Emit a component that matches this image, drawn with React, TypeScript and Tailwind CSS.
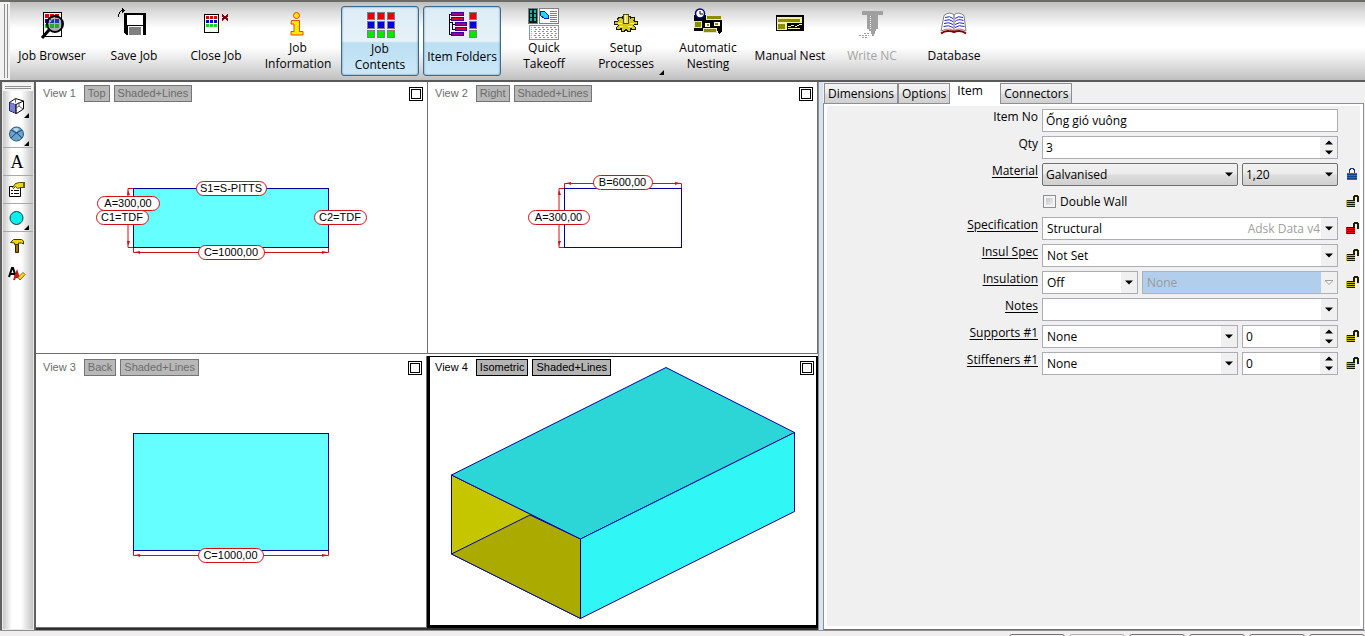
import { useState } from 'react';
import type { ReactNode } from 'react';

const RED = '#d01018';
const NAVY = '#0000a0';
const RGB_ROWS = ['#e80000', '#0000e0', '#00e800'];

/* ---------- Toolbar icons ---------- */

function Icon({ children }: { children: ReactNode }) {
  return (
    <svg width="32" height="32" viewBox="0 0 32 32" fill="none" shapeRendering="crispEdges" aria-hidden="true">
      {children}
    </svg>
  );
}

function Cells({ x, y, cols, w, h, pitchX, pitchY, stroke }: { x: number; y: number; cols: number; w: number; h: number; pitchX: number; pitchY: number; stroke?: string }) {
  return (
    <>
      {RGB_ROWS.map((fill, row) =>
        Array.from({ length: cols }, (_, col) => (
          <rect key={`${row}-${col}`} x={x + col * pitchX} y={y + row * pitchY} width={w} height={h} fill={fill} stroke={stroke} />
        ))
      )}
    </>
  );
}

const JobBrowserIcon = () => (
  <Icon>
    <rect x="7.5" y="4.5" width="18" height="24" fill="#fff" stroke="#000" />
    <Cells x={9} y={6} cols={3} w={4} h={4} pitchX={5} pitchY={5} />
    <g shapeRendering="auto">
      <circle cx="19" cy="16" r="8" fill="#506070" fillOpacity="0.5" stroke="#000" strokeWidth="2" />
      <path d="M14 14a6 6 0 0 1 4-4" stroke="#d0e0e8" />
      <path d="M13 22l-7 8" stroke="#000" strokeWidth="3" />
    </g>
  </Icon>
);

const SaveIcon = () => (
  <Icon>
    <path d="M6 5h22v22H8l-2-2z" fill="#000" />
    <path d="M9 7h16v10H9z" fill="#fff" />
    <path d="M10 18h15v9H10z" fill="#fff" />
    <path d="M11 19h12v8H11z" fill="#808080" />
    <path d="M0 6h1v3H0zM1 4h1v2H1zM2 3h1v1H2zM3 2h2v1H3zM4 0h1v5H4zM5 1h1v3H5zM6 2h1v1H6z" fill="#000" />
  </Icon>
);

const CloseIcon = () => (
  <Icon>
    <rect x="4.5" y="6.5" width="14" height="18" fill="#fff" stroke="#000" />
    <Cells x={6} y={8} cols={3} w={3} h={3} pitchX={4} pitchY={4} />
    <path d="M22 7l6 5M28 7l-6 5" stroke="#800010" strokeWidth="2" />
  </Icon>
);

const InfoIcon = () => (
  <Icon>
    <g fill="#ffe800" stroke="#e84800" shapeRendering="auto">
      <circle cx="14.5" cy="7.5" r="3" />
      <path d="M9.5 12.5h8v11h3.500v3.500h-12v-3.500h3v-7.500h-3z" />
    </g>
  </Icon>
);

const ContentsIcon = () => (
  <Icon>
    <Cells x={3.5} y={3.5} cols={3} w={7} h={7} pitchX={10} pitchY={9} stroke="#808080" />
  </Icon>
);

const FoldersIcon = () => (
  <Icon>
    <path d="M5 5.500H3.500v20H5M3.500 10.500H6M3.500 13.500h3v7H9M6 15.500h3" stroke="#000" />
    <g stroke="#4000a0">
      <rect x="5.5" y="3.5" width="12" height="3" fill="#a00080" />
      <rect x="5.5" y="8.5" width="12" height="3" fill="#e00020" />
      <rect x="9.5" y="13.500" width="11" height="3" fill="#a00080" />
      <rect x="9.5" y="18.500" width="11" height="3" fill="#e00020" />
      <rect x="5.5" y="23.500" width="12" height="3" fill="#a00080" />
    </g>
    <Cells x={23.5} y={3.5} cols={1} w={7} h={7} pitchX={10} pitchY={9} stroke="#808080" />
  </Icon>
);

const TakeoffIcon = () => (
  <Icon>
    <rect x="0.5" y="0.5" width="9" height="15" fill="#101820" stroke="#708080" />
    <path d="M3 2v12M7 2v12" stroke="#20b0a0" strokeWidth="2" strokeDasharray="3 1" />
    <rect x="11.5" y="0.5" width="19" height="15" fill="#fff" stroke="#808080" />
    <path d="M12.500 3.500h4l4 4v3h-4l-4-3z" fill="#20d8f8" stroke="#1020c0" />
    <path d="M22 3.500h7M22 5.500h7M22 7.500h7M22 9.500h7M22 11.500h7M22 13.500h7" stroke="#808080" />
    <rect x="1.500" y="17.500" width="29" height="14" fill="#fff" stroke="#909090" />
    <path d="M3.500 19v11" stroke="#30e0f0" strokeDasharray="1 1" />
    <path d="M6 19.500h23M7 21.500h22M6 23.500h23M7 25.500h22M6 27.500h23M7 29.500h22" stroke="#909090" strokeDasharray="2 2" />
  </Icon>
);

const GearIcon = () => (
  <Icon>
    <path
      d="M8.500 9.500h3l1 1v-2h3v-1h2v1h3v2l1-1h3v3h-1l1 1h3v3h-3l-1 1 2 2v2h-3l-2-1v3h-3l-1-2h-1l-1 2h-3v-3l-2 1h-3v-2l2-2-1-1h-3v-3h3l1-1-1-1z"
      fill="#d8c820"
      stroke="#181800"
    />
    <path d="M8 15.500h4M20 15.500h4M10 18.500h3M18 18.500h4" stroke="#fff480" />
    <rect x="13.500" y="6.500" width="5" height="9" fill="#e8dc60" stroke="#505010" />
    <path d="M15.500 7v8" stroke="#fffac0" />
  </Icon>
);

const AutoNestIcon = () => (
  <Icon>
    <path d="M2 7h28v16H2z" fill="#000" />
    <g fill="#8c8c00" stroke="#e8e8c0">
      <rect x="14.500" y="7.500" width="15" height="4" />
      <rect x="2.500" y="13.500" width="7" height="6" />
      <rect x="11.500" y="20.500" width="13" height="4" />
    </g>
    <g fill="#fff">
      <rect x="13" y="15" width="5" height="4" />
      <rect x="22" y="14" width="6" height="4" />
    </g>
    <path d="M15 16h2v2h-2zM23 15h3v2h-3z" fill="#8c8c00" />
    <path d="M26 23h4l-3 3z" fill="#000" />
    <g shapeRendering="auto">
      <circle cx="8" cy="5.500" r="4.500" fill="#fff" stroke="#000080" strokeWidth="1.500" />
      <path d="M8 3v3h3" stroke="#000" />
    </g>
  </Icon>
);

const ManualNestIcon = () => (
  <Icon>
    <path d="M2 7h28v16H2z" fill="#000" />
    <path d="M3 9h25v6H3zM3 15h10v7H3z" fill="#f0f0a0" />
    <path d="M4 11h22v3H4zM4 16h7v5H4z" fill="#8c8c00" />
    <path d="M3 14.500h10" stroke="#f0f0a0" />
    <path d="M14 18.500h3M17 17.500h3M21 18.500h2M23 17.500h2M25 16.500h3M14 20.500h12" stroke="#f0f0a0" />
  </Icon>
);

const WriteNcIcon = () => (
  <Icon>
    <path d="M6 3h21v4h-5v14h-2v2h-1v3h-1v2h-2v-2h-1v-3h-2v-2h-2V7H6z" fill="#a0a0a0" />
    <path d="M14.500 8v13" stroke="#fff" strokeDasharray="1 1" />
    <path d="M8 25.500h6M3 27.500h10M6 29.500h5" stroke="#a0a0a0" strokeDasharray="2 1" />
  </Icon>
);

const DatabaseIcon = () => (
  <Icon>
    <g shapeRendering="auto">
      <path d="M6 7.500Q12 3 16 7Q20 3 26 7.500L28 23Q20 19 16 23Q12 19 3 23z" fill="#fff" stroke="#808080" />
      <path
        d="M7 9.500q5-2 8 1M6.500 12.500q5-2 8.500 1M6 15.500q5-2 9 1M5.500 18.500q5-2 9.500 1M17 10.500q3-3 8-1M17 13.500q3-3 8.500-1M17 16.500q4-3 9-1M17 19.500q4-3 9.500-1"
        stroke="#2020d0"
      />
      <path d="M16 7v15" stroke="#606060" />
      <path d="M3 25.500q4-3 8-2.500 3 0 5 1 2-1 5-1 4 0 7 2.500" stroke="#800000" strokeWidth="2" />
    </g>
  </Icon>
);

interface Tool {
  lines: string[];
  icon: ReactNode;
  pressed?: boolean;
  disabled?: boolean;
  menu?: boolean;
}

const TOOLS: Tool[] = [
  { lines: ['Job Browser'], icon: <JobBrowserIcon /> },
  { lines: ['Save Job'], icon: <SaveIcon /> },
  { lines: ['Close Job'], icon: <CloseIcon /> },
  { lines: ['Job', 'Information'], icon: <InfoIcon /> },
  { lines: ['Job', 'Contents'], icon: <ContentsIcon />, pressed: true },
  { lines: ['Item Folders'], icon: <FoldersIcon />, pressed: true },
  { lines: ['Quick', 'Takeoff'], icon: <TakeoffIcon /> },
  { lines: ['Setup', 'Processes'], icon: <GearIcon />, menu: true },
  { lines: ['Automatic', 'Nesting'], icon: <AutoNestIcon /> },
  { lines: ['Manual Nest'], icon: <ManualNestIcon /> },
  { lines: ['Write NC'], icon: <WriteNcIcon />, disabled: true },
  { lines: ['Database'], icon: <DatabaseIcon /> },
];

function MenuCorner() {
  return (
    <svg width="5" height="5" viewBox="0 0 5 5" className="absolute right-0 bottom-0" aria-hidden="true">
      <path d="M5 0v5H0z" fill="#000" />
    </svg>
  );
}

function ToolButton({ tool }: { tool: Tool }) {
  return (
    <button
      disabled={tool.disabled}
      aria-pressed={tool.pressed}
      className={`relative flex w-[78px] h-[70px] shrink-0 flex-col items-center rounded-[3px] border text-xs leading-4 whitespace-nowrap ${
        tool.pressed
          ? 'border-[#3c6a8c] bg-[linear-gradient(#dcecf6_0%,#e6f2f9_50%,#bcdff2_53%,#cce8f8_100%)] pt-0.5 shadow-[inset_0_0_2px_#4a7898]'
          : 'border-transparent pt-px'
      } ${tool.disabled ? 'text-[#a4a4a4]' : 'text-black'}`}
    >
      {tool.icon}
      <span className="flex h-8 flex-col justify-center">
        {tool.lines.map((line) => (
          <span key={line}>{line}</span>
        ))}
      </span>
      {tool.menu && <MenuCorner />}
    </button>
  );
}

function Toolbar() {
  return (
    <header className="flex border-b-2 border-[#5a5a5a] bg-[#ececec]">
      <div className="flex flex-1 border-t-2 border-[#6a6a66]">
        <div className="flex w-2.5 shrink-0 gap-0.5 bg-[#f2f2f2] py-0.5 pl-1">
          <span className="w-px bg-[#909090]" />
          <span className="w-px bg-[#909090]" />
        </div>
        <div className="flex flex-1 gap-1 overflow-hidden bg-[linear-gradient(#bebebe_0%,#dedede_14%,#ffffff_34%,#ffffff_58%,#e0e0e0_80%,#c0c0c0_100%)] py-1 pl-[3px]">
          {TOOLS.map((tool) => (
            <ToolButton key={tool.lines.join(' ')} tool={tool} />
          ))}
        </div>
      </div>
    </header>
  );
}

/* ---------- Side bar ---------- */

function SmallIcon({ children }: { children: ReactNode }) {
  return (
    <svg width="18" height="18" viewBox="0 0 18 18" fill="none" aria-hidden="true">
      {children}
    </svg>
  );
}

const SIDE_TOOLS = [
  {
    name: 'View direction',
    menu: true,
    icon: (
      <SmallIcon>
        <path d="M1.500 5.500l6-4 8 2.500v8l-7 4.500-7-3z" fill="#fff" stroke="#000" />
        <path d="M1.500 5.500l6.500 2v9l-6.500-3z" fill="#8080d0" stroke="#000080" strokeDasharray="1 1" />
        <path d="M8 7.500l7.500-3.500M8 7.500v9" stroke="#000" />
        <path d="M7.500 1.500v4M8 11l3-2 4 3M11 5v4" stroke="#606060" />
      </SmallIcon>
    ),
  },
  {
    name: 'Shading',
    menu: true,
    icon: (
      <SmallIcon>
        <circle cx="8.500" cy="9" r="7" fill="#6aa4cc" stroke="#305878" />
        <path d="M3 5q6 2 11 8M14 5q-6 2-11 8" stroke="#1c4468" />
        <path d="M5 4q3-2 6 0L8.500 7z" fill="#b8dcf0" />
      </SmallIcon>
    ),
  },
  {
    name: 'Text',
    line: true,
    icon: <span className="font-['Liberation_Serif',serif] text-lg leading-5">A</span>,
  },
  {
    name: 'Properties',
    line: true,
    icon: (
      <SmallIcon>
        <path d="M1.500 5.500h11v10h-11z" fill="#fff" stroke="#000" />
        <path d="M3 9.500h2M6 9.500h5M3 12.500h2M6 12.500h5" stroke="#000" />
        <path d="M4.500 6.500l3-4 4-1h4v5h-3l-3 1-2-2-2 2z" fill="#e8d820" stroke="#504800" />
        <path d="M15 1h2v6h-2z" fill="#606000" />
      </SmallIcon>
    ),
  },
  {
    name: 'Colour',
    line: true,
    menu: true,
    icon: (
      <SmallIcon>
        <circle cx="8.500" cy="9" r="6.500" fill="#00f0f0" stroke="#104040" />
      </SmallIcon>
    ),
  },
  {
    name: 'Build',
    line: true,
    icon: (
      <SmallIcon>
        <path d="M7.500 7h3v8.500h-3z" fill="#a07000" stroke="#302000" />
        <path d="M2.500 5.500l3-3h8l2 1.500v3l-2-1h-3v1.500h-4V6z" fill="#f0d800" stroke="#403800" />
      </SmallIcon>
    ),
  },
  {
    name: 'Clear annotations',
    icon: (
      <SmallIcon>
        <path d="M1 12l3-9h1l3 9M2 9h5" stroke="#000" strokeWidth="2" />
        <path d="M6 15l3-8 2 6M7 12h4" stroke="#d01010" strokeWidth="2" />
        <path d="M10 12.500l5-5 2 2-5 5.500z" fill="#ffe020" stroke="#806000" />
      </SmallIcon>
    ),
  },
];

function SideBar() {
  return (
    <aside className="w-9 shrink-0 border-x-2 border-[#606060]">
      <div className="h-full border border-[#e8e8e8] bg-[linear-gradient(90deg,#c8c8c8_0%,#ffffff_30%,#ffffff_60%,#c4c4c4_100%)]">
        <div className="flex h-2 flex-col justify-center gap-px bg-[#f4f4f4] px-0.5">
          <span className="h-px bg-[#909090]" />
          <span className="h-px bg-[#909090]" />
        </div>
        {SIDE_TOOLS.map((tool) => (
          <div key={tool.name} className={`flex h-7 items-center border-t pl-0.5 ${tool.line ? 'border-[#a8a8a8]' : 'border-transparent'}`}>
            <button aria-label={tool.name} className="relative flex size-6 items-center justify-center">
              {tool.icon}
              {tool.menu && <MenuCorner />}
            </button>
          </div>
        ))}
      </div>
    </aside>
  );
}

/* ---------- Views ---------- */

function Tag({ x, y, w, children }: { x: number; y: number; w: number; children: string }) {
  return (
    <g>
      <rect x={x + 0.5} y={y + 0.5} width={w} height="14" rx="7" fill="#fff" stroke={RED} />
      <text x={x + w / 2} y={y + 11} textAnchor="middle" fill="#000" className="font-['Liberation_Sans',Arial,sans-serif] text-[11px]">
        {children}
      </text>
    </g>
  );
}

function TopDrawing() {
  return (
    <svg width="391" height="271" viewBox="0 0 391 271" fill="none" className="shrink-0">
      <rect x="97.500" y="106.500" width="195" height="59" fill="#66ffff" stroke={NAVY} />
      <path d="M97 106.500h-5v59h5M97.500 166v4.500h195V166" stroke={RED} />
      <path d="M91 113l1-5 2 5zM91 159l1 5 2-5zM104 169l-5 1 5 2zM286 169l5 1-5 2z" fill={RED} />
      <Tag x={160} y={99} w={70}>S1=S-PITTS</Tag>
      <Tag x={61} y={114} w={62}>A=300,00</Tag>
      <Tag x={60} y={128} w={52}>C1=TDF</Tag>
      <Tag x={278} y={128} w={52}>C2=TDF</Tag>
      <Tag x={162} y={163} w={66}>C=1000,00</Tag>
    </svg>
  );
}

function RightDrawing() {
  return (
    <svg width="389" height="271" viewBox="0 0 389 271" fill="none" className="shrink-0">
      <rect x="136.500" y="106.500" width="117" height="59" stroke={NAVY} />
      <path d="M136 106.500h-5v59h5M136.500 106v-4.500h117v4.500" stroke={RED} />
      <path d="M130 113l1-5 2 5zM130 159l1 5 2-5zM143 100l-5 1 5 2zM247 100l5 1-5 2z" fill={RED} />
      <Tag x={165} y={93} w={59}>B=600,00</Tag>
      <Tag x={100} y={128} w={61}>A=300,00</Tag>
    </svg>
  );
}

function BackDrawing() {
  return (
    <svg width="390" height="271" viewBox="0 0 390 271" fill="none" className="shrink-0">
      <rect x="97.500" y="77.500" width="195" height="117" fill="#66ffff" stroke={NAVY} />
      <path d="M97.500 195v4.500h195V195" stroke={RED} />
      <path d="M104 198l-5 1 5 2zM286 198l5 1-5 2z" fill={RED} />
      <Tag x={162} y={192} w={65}>C=1000,00</Tag>
    </svg>
  );
}

function IsometricDrawing() {
  return (
    <svg width="386" height="268" viewBox="0 0 386 268" fill="none" stroke={NAVY} strokeLinejoin="round" className="shrink-0">
      <path d="M21.500 118L150.500 182V261.500L21.500 197z" fill="#c6c600" />
      <path d="M21.500 197L100 158L150.500 182V261.500z" fill="#aaaa00" />
      <path d="M21.500 118L236 10.500L364.500 75.500L150.500 182z" fill="#2cd6d6" />
      <path d="M150.500 182L364.500 75.500V154.500L150.500 261.500z" fill="#30f6f6" />
    </svg>
  );
}

interface ViewProps {
  name: string;
  direction: string;
  active?: boolean;
  frame: string;
  children: ReactNode;
}

function View({ name, direction, active, frame, children }: ViewProps) {
  const badge = active ? 'border-black text-black bg-[#b4b4b4]' : 'border-[#747474] text-[#6c6c6c] bg-[#b8b8b8]';
  return (
    <section className={`relative overflow-hidden bg-white ${frame}`}>
      <div className="absolute inset-0 flex items-center justify-center">{children}</div>
      <div
        className={`relative flex items-center gap-1 font-['Liberation_Sans',Arial,sans-serif] text-[11px] leading-[15px] ${
          active ? 'pt-0.5 pr-0.5 pl-[5px]' : 'pt-[3px] pr-1 pl-[7px]'
        }`}
      >
        <h2 className={`mr-1 ${active ? 'text-black' : 'text-[#6c6c6c]'}`}>{name}</h2>
        <button className={`border px-[3px] ${badge}`}>{direction}</button>
        <button className={`border px-[3px] ${badge}`}>Shaded+Lines</button>
        <button aria-label={`Maximise ${name}`} className="ml-auto">
          <svg width="14" height="14" viewBox="0 0 14 14" fill="#fff" stroke="#000" shapeRendering="crispEdges">
            <rect x="0.500" y="0.500" width="13" height="13" />
            <rect x="2.500" y="2.500" width="9" height="9" />
          </svg>
        </button>
      </div>
    </section>
  );
}

function Views() {
  return (
    <main className="grid min-w-0 flex-1 grid-cols-2 grid-rows-2 gap-y-0.5 border-b-2 border-[#303030] bg-white">
      <View name="View 1" direction="Top" frame="border-b border-[#707070]">
        <TopDrawing />
      </View>
      <View name="View 2" direction="Right" frame="border-x border-b border-[#707070]">
        <RightDrawing />
      </View>
      <View name="View 3" direction="Back" frame="border-r border-b border-[#707070]">
        <BackDrawing />
      </View>
      <View name="View 4" direction="Isometric" active frame="border-t border-r-2 border-b-[3px] border-l-[3px] border-black">
        <IsometricDrawing />
      </View>
    </main>
  );
}

/* ---------- Item panel ---------- */

function Padlock({ color, closed }: { color: string; closed?: boolean }) {
  return (
    <svg width="13" height="13" viewBox="0 0 13 13" fill="none" shapeRendering="crispEdges" className="mt-[5px]" aria-hidden="true">
      {closed ? (
        <>
          <path d="M3 1h1V0h4v1h1v4H8V2H7V1H5v1H4v3H3z" fill="#183878" />
          <path d="M1 5h10v7H1z" fill={color} />
          <path d="M1 6h10v1H1zM1 8h10v1H1zM1 10h10v1H1z" fill="#104090" />
        </>
      ) : (
        <>
          <path d="M7 1h1V0h4v1h1v6h-2V2H9v3H7z" fill="#202000" />
          <path d="M0 5h9v7H0z" fill={color} />
          <path d="M1 5h8v1H1zM1 7h8v1H1zM1 9h8v1H1zM1 11h8v1H1z" fill="#181800" />
        </>
      )}
    </svg>
  );
}

function Arrow({ up, hollow }: { up?: boolean; hollow?: boolean }) {
  return (
    <svg width="8" height="5" viewBox="0 0 8 5" aria-hidden="true">
      <path d={up ? 'M0 4.500L4 0.500l4 4z' : 'M0 0.500h8L4 4.500z'} fill={hollow ? '#f4f4f4' : '#000'} stroke={hollow ? '#a0a0a0' : 'none'} />
    </svg>
  );
}

interface ComboProps {
  id?: string;
  label?: string;
  value: string;
  note?: string;
  raised?: boolean;
  disabled?: boolean;
  width?: string;
}

function Combo({ id, label, value, note, raised, disabled, width = 'flex-1' }: ComboProps) {
  const box = raised
    ? 'rounded-[2px] border-[#707070] bg-[linear-gradient(#f2f2f2_0%,#ebebeb_48%,#dddddd_52%,#cfcfcf_100%)] pl-[3px]'
    : disabled
      ? 'border-[#adb2b5] bg-[#b1ceec] pl-1'
      : 'border-[#abadb3] bg-white pl-1';
  return (
    <span className={`relative flex h-[23px] min-w-0 ${width}`}>
      <select
        id={id}
        aria-label={label}
        disabled={disabled}
        defaultValue={value}
        className={`w-full appearance-none border opacity-100 outline-none ${box} ${disabled ? 'text-[#9a9a9a]' : 'text-black'}`}
      >
        <option>{value}</option>
      </select>
      {note && <span className="pointer-events-none absolute inset-y-0 right-[18px] flex items-center text-[#a0a0a0]">{note}</span>}
      <span className={`pointer-events-none absolute inset-y-px right-px flex w-4 items-center justify-center ${raised ? '' : 'bg-[#f0f0f0]'}`}>
        <Arrow hollow={disabled} />
      </span>
    </span>
  );
}

function Spin({ id, label, value, width = 'flex-1' }: { id?: string; label?: string; value: string; width?: string }) {
  const [amount, setAmount] = useState(value);
  const step = (by: number) => setAmount(String(Math.max(0, Number(amount) + by)));
  return (
    <span className={`flex h-[23px] min-w-0 border border-[#abadb3] bg-white ${width}`}>
      <input
        id={id}
        aria-label={label}
        inputMode="numeric"
        value={amount}
        onChange={(e) => setAmount(e.target.value)}
        className="w-full min-w-0 pl-[3px] outline-none"
      />
      <span className="flex w-[17px] shrink-0 flex-col bg-[#f0f0f0]">
        <button aria-label="Increase" onClick={() => step(1)} className="flex flex-1 items-center justify-center">
          <Arrow up />
        </button>
        <button aria-label="Decrease" onClick={() => step(-1)} className="flex flex-1 items-center justify-center">
          <Arrow />
        </button>
      </span>
    </span>
  );
}

interface RowProps {
  label?: string;
  htmlFor?: string;
  link?: boolean;
  lock?: ReactNode;
  children: ReactNode;
}

function Row({ label, htmlFor, link, lock, children }: RowProps) {
  return (
    <div className="flex h-[23px] gap-1">
      <label htmlFor={htmlFor} className={`w-[211px] shrink-0 text-right leading-4 ${link ? 'underline underline-offset-2' : ''}`}>
        {label}
      </label>
      <div className="flex min-w-0 flex-1 items-center gap-1">{children}</div>
      <div className="ml-1 w-3.5 shrink-0">{lock}</div>
    </div>
  );
}

const OLIVE = '#c0c000';

function ItemForm() {
  return (
    <form className="flex flex-col gap-1 text-xs" onSubmit={(e) => e.preventDefault()}>
      <Row label="Item No" htmlFor="item-no">
        <input id="item-no" defaultValue="Ống gió vuông" className="h-[23px] w-full border border-[#abadb3] bg-white pl-[3px] outline-none" />
      </Row>
      <Row label="Qty" htmlFor="qty">
        <Spin id="qty" value="3" />
      </Row>
      <Row label="Material" htmlFor="material" link lock={<Padlock color="#2868d0" closed />}>
        <Combo id="material" value="Galvanised" raised />
        <Combo label="Gauge" value="1,20" raised width="w-24" />
      </Row>
      <Row lock={<Padlock color={OLIVE} />}>
        <input
          id="double-wall"
          type="checkbox"
          className="ml-px size-[13px] appearance-none border border-[#8e8f8f] bg-[linear-gradient(135deg,#b8bcc4,#f8f8f8)] shadow-[inset_0_0_0_2px_#f4f4f4] checked:bg-[#3c6a8c]"
        />
        <label htmlFor="double-wall">Double Wall</label>
      </Row>
      <Row label="Specification" htmlFor="specification" link lock={<Padlock color="#f00010" />}>
        <Combo id="specification" value="Structural" note="Adsk Data v4" />
      </Row>
      <Row label="Insul Spec" htmlFor="insul-spec" link lock={<Padlock color={OLIVE} />}>
        <Combo id="insul-spec" value="Not Set" />
      </Row>
      <Row label="Insulation" htmlFor="insulation" link lock={<Padlock color={OLIVE} />}>
        <Combo id="insulation" value="Off" width="w-24" />
        <Combo label="Insulation material" value="None" disabled />
      </Row>
      <Row label="Notes" htmlFor="notes" link>
        <Combo id="notes" value="" />
      </Row>
      <Row label="Supports #1" htmlFor="supports" link lock={<Padlock color={OLIVE} />}>
        <Combo id="supports" value="None" />
        <Spin label="Supports count" value="0" width="w-24" />
      </Row>
      <Row label="Stiffeners #1" htmlFor="stiffeners" link lock={<Padlock color={OLIVE} />}>
        <Combo id="stiffeners" value="None" />
        <Spin label="Stiffeners count" value="0" width="w-24" />
      </Row>
    </form>
  );
}

const TABS = ['Dimensions', 'Options', 'Item', 'Connectors'];

function ItemPanel() {
  return (
    <div className="flex w-[547px] shrink-0 flex-col border-l border-[#909090] bg-white">
      <div className="flex flex-1 flex-col border-l-4 border-[#d5e3f3] bg-[#f0f0f0]">
        <div role="tablist" className="flex h-[21px] items-end pl-px text-xs">
          {TABS.map((tab) =>
            tab === 'Item' ? (
              <button key={tab} role="tab" aria-selected="true" className="relative z-10 -mb-px h-[22px] w-[50px] self-start bg-white pb-1 pl-[7px] text-left leading-4">
                {tab}
              </button>
            ) : (
              <button
                key={tab}
                role="tab"
                aria-selected="false"
                className="h-5 border border-b-0 border-[#8c8e94] bg-[linear-gradient(#f4f4f4_0%,#ececec_48%,#dddddd_52%,#d0d0d0_100%)] px-[3px] leading-4"
              >
                {tab}
              </button>
            )
          )}
        </div>
        <div role="tabpanel" className="mr-px flex-1 border border-[#8c8e94] border-b-[#707070] bg-white p-[3px] pt-0.5">
          <div className="h-full bg-[#f0f0f0] pt-[3px]">
            <ItemForm />
          </div>
        </div>
      </div>
    </div>
  );
}

const STATUS_PANES = ['border-[#707070]', 'border-[#b0b0b0]', 'border-[#707070]', 'border-[#707070]', 'border-[#707070]', 'border-[#707070]'];

function StatusBar() {
  return (
    <footer className="h-1.5 shrink-0 overflow-hidden border-t border-[#909090] bg-[#f0eeee] pt-[3px]">
      <div className="flex justify-end gap-1">
        {STATUS_PANES.map((pane, i) => (
          <div key={i} className={`h-4 w-14 rounded-[3px] border bg-[#f8f8f8] ${pane}`} />
        ))}
      </div>
    </footer>
  );
}

export default function App() {
  return (
    <div className="flex h-screen flex-col overflow-hidden bg-[#f0f0f0] font-['Open_Sans','Segoe_UI',sans-serif] text-black">
      <Toolbar />
      <div className="flex min-h-0 flex-1">
        <SideBar />
        <Views />
        <ItemPanel />
      </div>
      <StatusBar />
    </div>
  );
}
